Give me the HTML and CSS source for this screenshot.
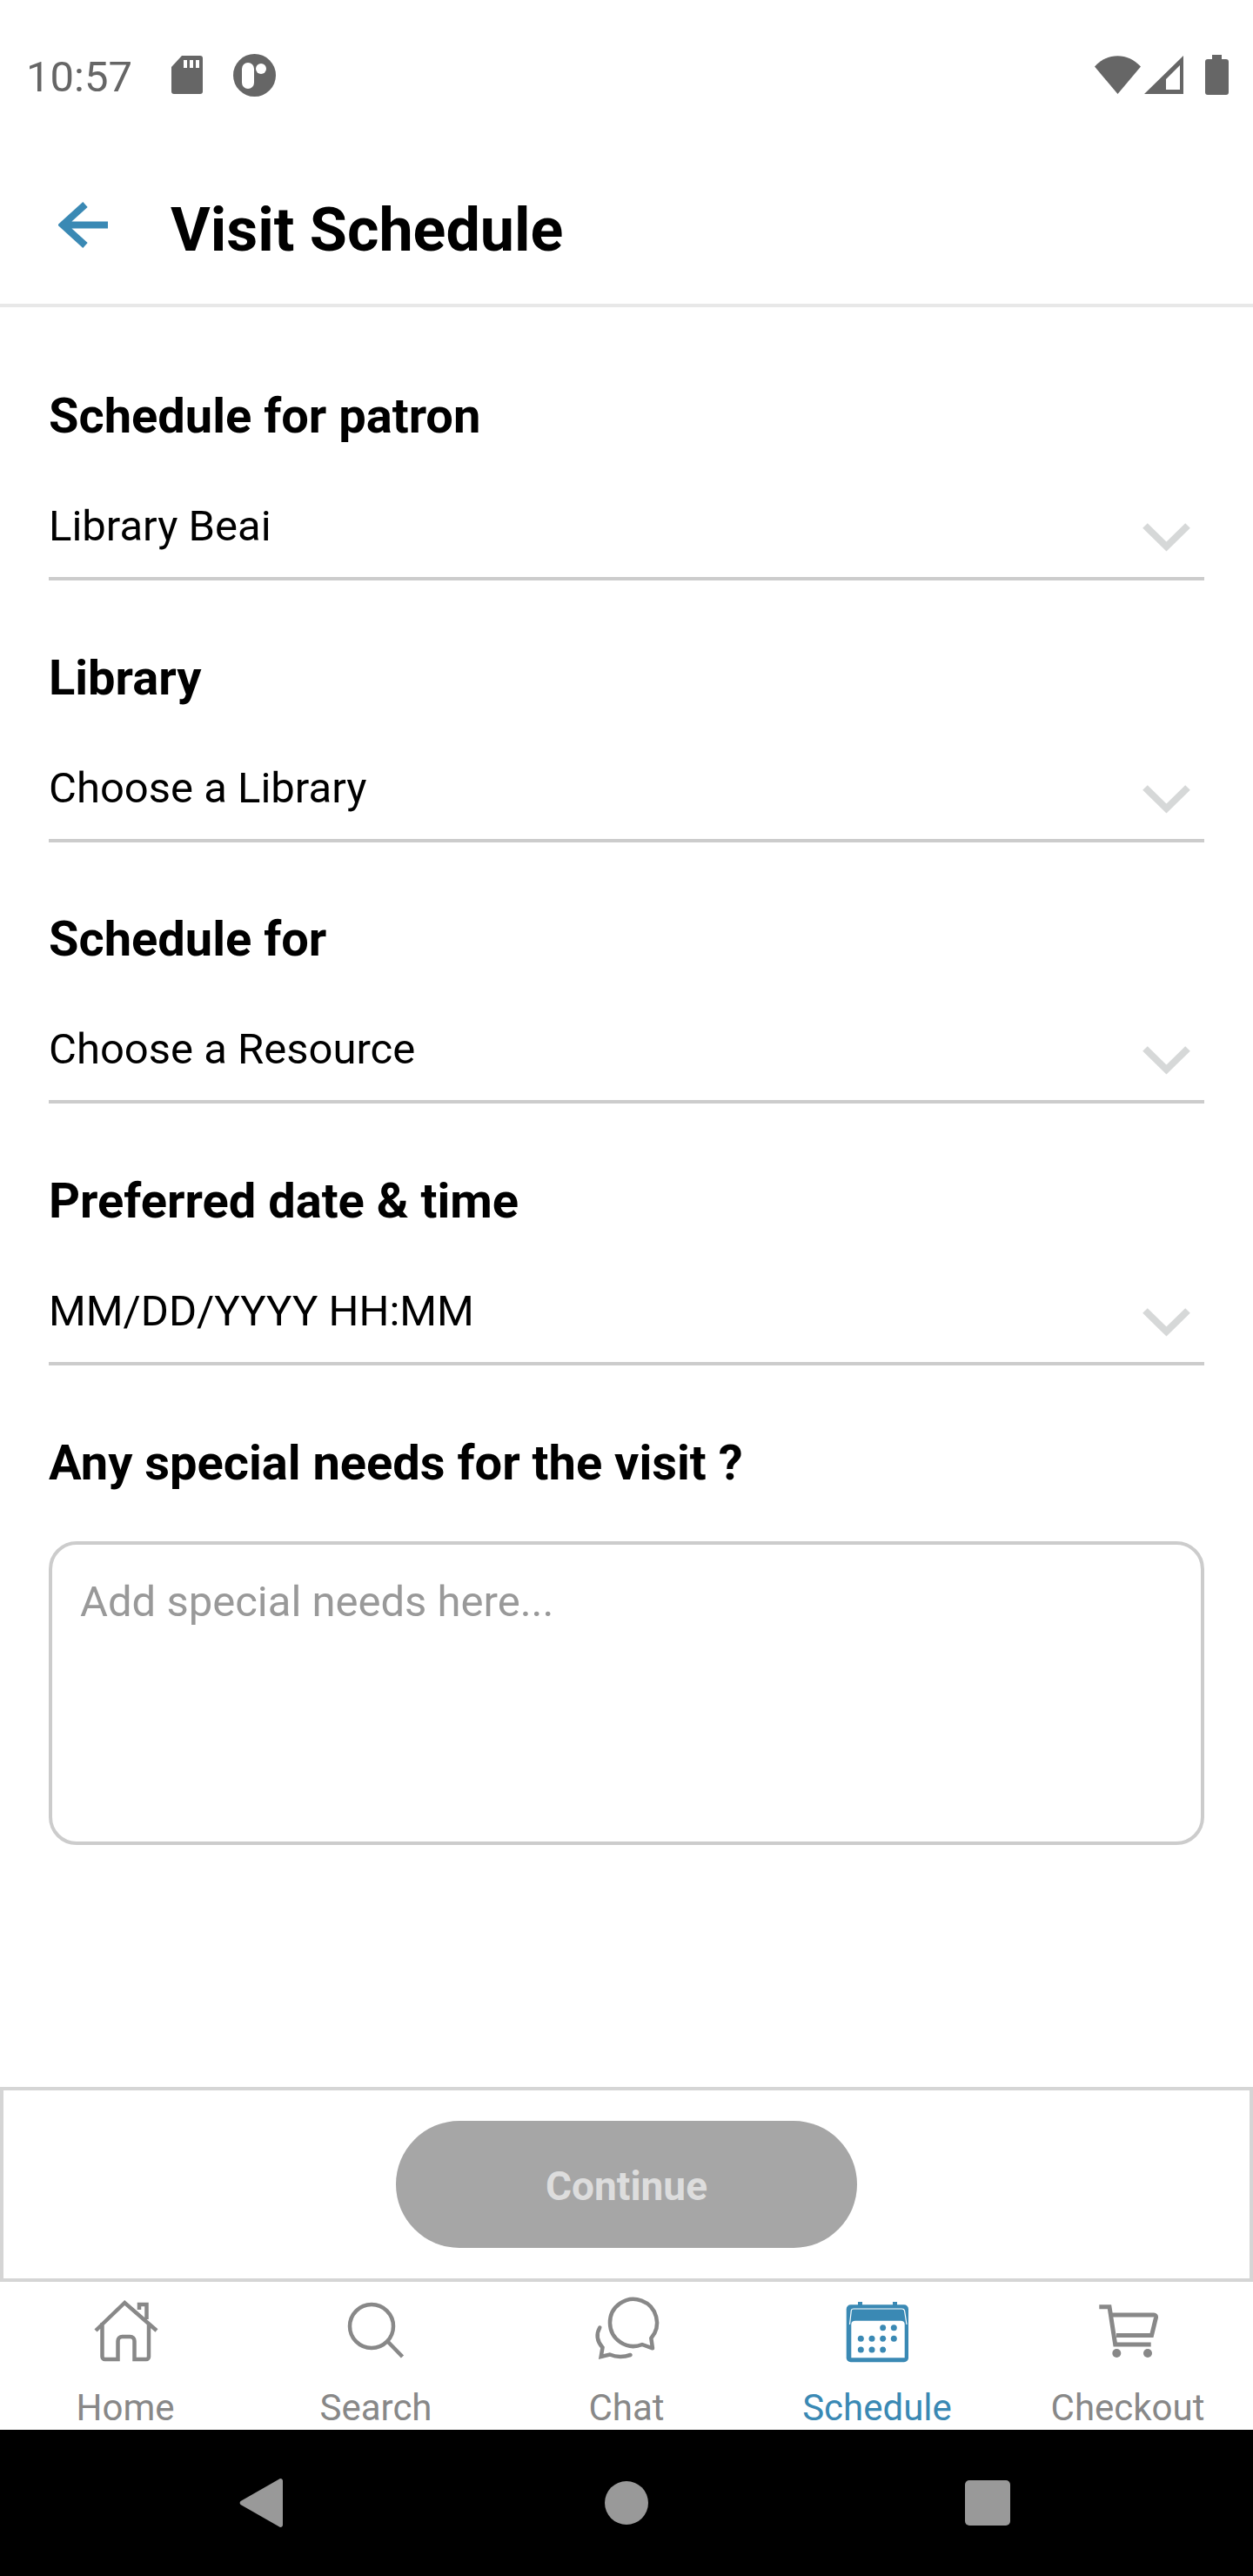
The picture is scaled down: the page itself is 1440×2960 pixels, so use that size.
FILE: index.html
```html
<!DOCTYPE html>
<html>
<head>
    <meta charset="UTF-8">
    <title>Visit Schedule</title>
    <link rel="stylesheet" href="styles.css">
</head>
<body>
    <div class="status-bar">
        <div class="status-left">
            <span class="time">10:57</span>
            <svg class="sd-icon" width="36" height="44" viewBox="0 0 36 44">
                <path d="M12 0H33a3 3 0 0 1 3 3V41a3 3 0 0 1-3 3H3a3 3 0 0 1-3-3V13Z" fill="#666"/>
                <path d="M14 5h4v9h-4zM21 5h4v9h-4zM28 5h4v9h-4z" fill="#fff"/>
            </svg>
            <svg class="cast-icon" width="49" height="49" viewBox="0 0 49 49">
                <circle cx="24.500" cy="24.500" r="24.500" fill="#666"/>
                <rect x="10" y="10" width="14" height="30" rx="7" fill="#fff"/>
                <circle cx="32" cy="17" r="6" fill="#fff"/>
            </svg>
        </div>
        <div class="status-right">
            <svg width="53" height="44" viewBox="0 0 53 44">
                <path d="M0 12.500C15 -4 38 -4 53 12.500L26.500 44Z" fill="#666"/>
            </svg>
            <svg class="signal-icon" width="45" height="44" viewBox="0 0 45 44">
                <path d="M45 0V44H0ZM41 11 25 27V39H41Z" fill="#666" fill-rule="evenodd"/>
            </svg>
            <svg class="battery-icon" width="27" height="46" viewBox="0 0 27 46">
                <path d="M8 0H19V5H24a3 3 0 0 1 3 3V43a3 3 0 0 1-3 3H3a3 3 0 0 1-3-3V8a3 3 0 0 1 3-3H8Z" fill="#666"/>
            </svg>
        </div>
    </div>

    <header class="app-header">
        <svg class="back-arrow" width="57" height="53" viewBox="0 0 57 53">
            <path d="M31 3 5 26.500 31 50M6 26.500H57" fill="none" stroke="#3a89b4" stroke-width="8"/>
        </svg>
        <h1 class="page-title">Visit Schedule</h1>
    </header>

    <main class="visit-form">
        <div class="field">
            <div class="field-label">Schedule for patron</div>
            <div class="select-row">
                <span>Library Beai</span>
                <svg class="chevron" width="55" height="33" viewBox="0 0 55 33"><path d="M3 3 27.500 27 52 3" fill="none" stroke="#d6d8d8" stroke-width="8"/></svg>
            </div>
        </div>
        <div class="field">
            <div class="field-label">Library</div>
            <div class="select-row">
                <span>Choose a Library</span>
                <svg class="chevron" width="55" height="33" viewBox="0 0 55 33"><path d="M3 3 27.500 27 52 3" fill="none" stroke="#d6d8d8" stroke-width="8"/></svg>
            </div>
        </div>
        <div class="field">
            <div class="field-label">Schedule for</div>
            <div class="select-row">
                <span>Choose a Resource</span>
                <svg class="chevron" width="55" height="33" viewBox="0 0 55 33"><path d="M3 3 27.500 27 52 3" fill="none" stroke="#d6d8d8" stroke-width="8"/></svg>
            </div>
        </div>
        <div class="field">
            <div class="field-label">Preferred date &amp; time</div>
            <div class="select-row">
                <span>MM/DD/YYYY HH:MM</span>
                <svg class="chevron" width="55" height="33" viewBox="0 0 55 33"><path d="M3 3 27.500 27 52 3" fill="none" stroke="#d6d8d8" stroke-width="8"/></svg>
            </div>
        </div>
        <div class="field-label">Any special needs for the visit ?</div>
        <div class="needs-box">Add special needs here...</div>
    </main>

    <div class="continue-panel">
        <div class="continue-btn">Continue</div>
    </div>

    <nav class="tab-bar">
        <div class="tab">
            <svg width="100" height="100" viewBox="0 0 100 100" fill="none" stroke="#888" stroke-width="4.500">
                <path d="M16 48 49.300 16 86 48M23.500 39V78a3 3 0 0 0 3 3H41.500V60a5 5 0 0 1 5-5H55.500a5 5 0 0 1 5 5V81H74a3 3 0 0 0 3-3V39M66 24V18H74.500V35"/>
            </svg>
            <span>Home</span>
        </div>
        <div class="tab">
            <svg width="100" height="100" viewBox="0 0 100 100" fill="none" stroke="#888" stroke-width="4.500">
                <circle cx="45" cy="43" r="25"/>
                <path d="M64 61 80.500 78"/>
            </svg>
            <span>Search</span>
        </div>
        <div class="tab">
            <svg width="100" height="100" viewBox="0 0 100 100" fill="none" stroke="#888" stroke-width="4.500" stroke-linecap="round">
                <path d="M68 64A27 27 0 1 1 78.300 56.700L80 68.300Z" stroke-linejoin="round"/>
                <path d="M19.300 44.500C15 52 16 60 22.500 67.500L20.700 78 30.700 75.500C38 78.500 47 78.500 54.500 76"/>
            </svg>
            <span>Chat</span>
        </div>
        <div class="tab tab-active">
            <svg width="100" height="100" viewBox="0 0 100 100">
                <rect x="14.700" y="18.300" width="71.300" height="66" rx="5" fill="#3a89b4"/>
                <rect x="28" y="15" width="5" height="6" fill="#3a89b4"/>
                <rect x="68" y="15" width="5" height="6" fill="#3a89b4"/>
                <path d="M18.500 41 20.300 25C20.500 23.500 21.500 23 23 23H78.500C80 23 81 23.500 81.500 25L84 41" fill="none" stroke="#fff" stroke-width="1.200"/>
                <path d="M20.300 41C20.300 38 22 36.700 25 36.700H77C80 36.700 81.700 38 81.700 41V79.300H20.300Z" fill="#fff"/>
                <g fill="#3a89b4">
                    <circle cx="56.700" cy="44.700" r="3.500"/>
                    <circle cx="69.300" cy="44.700" r="3.500"/>
                    <circle cx="31.300" cy="57.300" r="3.500"/>
                    <circle cx="44" cy="57.300" r="3.500"/>
                    <circle cx="56.700" cy="57.300" r="3.500"/>
                    <circle cx="69.300" cy="57.300" r="3.500"/>
                    <circle cx="31.300" cy="70" r="3.500"/>
                    <circle cx="44" cy="70" r="3.500"/>
                    <circle cx="56.700" cy="70" r="3.500"/>
                </g>
            </svg>
            <span>Schedule</span>
        </div>
        <div class="tab">
            <svg width="100" height="100" viewBox="0 0 100 100" fill="none" stroke="#888" stroke-width="5">
                <path d="M17.300 20.700H29L35.700 64H76.700M31 30H80a2.500 2.500 0 0 1 2.500 3L77.500 53.500H37"/>
                <circle cx="37.300" cy="74" r="5" fill="#888" stroke="none"/>
                <circle cx="73" cy="74" r="5" fill="#888" stroke="none"/>
            </svg>
            <span>Checkout</span>
        </div>
    </nav>

    <div class="android-bar">
        <svg class="nav-back" width="50" height="56" viewBox="0 0 50 56">
            <path d="M47 0a3 3 0 0 1 3 3V53a3 3 0 0 1-3 3L1.500 30a3 3 0 0 1 0-4Z" fill="#999"/>
        </svg>
        <div class="nav-home"></div>
        <div class="nav-recent"></div>
    </div>
</body>
</html>
```

FILE: styles.css
```css
* {
    box-sizing: border-box;
}
html, body {
    margin: 0;
    padding: 0;
}
body {
    width: 1440px;
    height: 2960px;
    display: flex;
    flex-direction: column;
    overflow: hidden;
    font-family: Roboto, "Liberation Sans", sans-serif;
    background-color: #ffffff;
    color: #000000;
}
svg {
    display: block;
    flex-shrink: 0;
}

/* status bar */
.status-bar {
    height: 172px;
    padding: 58px 28px 0 30px;
    display: flex;
    justify-content: space-between;
    align-items: flex-start;
}
.status-left, .status-right {
    height: 56px;
    display: flex;
    align-items: center;
}
.time {
    padding-top: 5px;
    width: 122px;
    font-size: 49px;
    line-height: 56px;
    color: #666666;
}
.sd-icon {
    margin-left: 45px;
}
.cast-icon {
    margin-left: 35px;
}
.signal-icon {
    margin-left: 4px;
}
.battery-icon {
    margin-left: 25px;
}

/* header */
.app-header {
    height: 181px;
    padding-left: 67px;
    display: flex;
    align-items: center;
    border-bottom: 4px solid #e8e8e8;
}
.back-arrow {
    margin-bottom: 4px;
}
.page-title {
    margin: 0 0 0 72px;
    padding-top: 7px;
    font-size: 70px;
    line-height: 80px;
    font-weight: 700;
}

/* form */
.visit-form {
    flex: 1;
    padding: 92px 56px 0;
}
.field {
    margin-bottom: 78.67px;
}
.field-label {
    font-size: 56px;
    line-height: 66px;
    font-weight: 700;
}
.select-row {
    margin-top: 64px;
    height: 92px;
    display: flex;
    justify-content: space-between;
    align-items: flex-start;
    border-bottom: 4px solid #cccccc;
    font-size: 49px;
    line-height: 60px;
}
.chevron {
    margin: 26px 16px 0 0;
}
.needs-box {
    margin-top: 57px;
    height: 349px;
    padding: 36px 32px;
    border: 4px solid #cccccc;
    border-radius: 32px;
    font-size: 49px;
    line-height: 60px;
    color: #999999;
}

/* continue */
.continue-panel {
    height: 224px;
    display: flex;
    justify-content: center;
    align-items: center;
    border: 4px solid #d5d5d5;
}
.continue-btn {
    width: 530px;
    height: 146px;
    padding-top: 3px;
    display: flex;
    justify-content: center;
    align-items: center;
    border-radius: 73px;
    background-color: #a6a6a6;
    color: #dddddd;
    font-size: 46px;
    font-weight: 700;
}

/* bottom tabs */
.tab-bar {
    height: 170px;
    display: grid;
    grid-template-columns: repeat(5, 288px);
}
.tab {
    padding-top: 8px;
    display: flex;
    flex-direction: column;
    align-items: center;
    font-size: 42px;
    line-height: 50px;
    color: #888888;
}
.tab span {
    margin-top: 12px;
}
.tab-active {
    color: #3a89b4;
}

/* android nav */
.android-bar {
    height: 168px;
    display: flex;
    align-items: center;
    background-color: #000000;
}
.nav-back {
    margin-left: 275px;
}
.nav-home {
    margin-left: 370px;
    width: 50px;
    height: 50px;
    border-radius: 50%;
    background-color: #999999;
}
.nav-recent {
    margin-left: 364px;
    width: 52px;
    height: 52px;
    border-radius: 5px;
    background-color: #999999;
}
```
